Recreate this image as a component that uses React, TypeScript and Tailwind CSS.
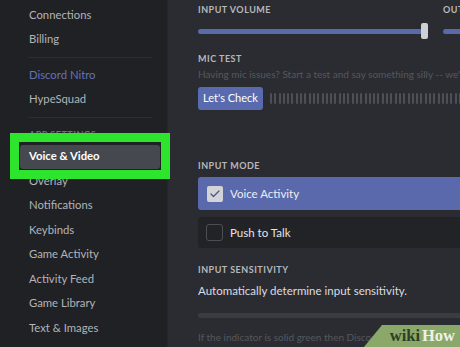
import { Check } from "lucide-react";

const font = "font-['Lato','Liberation_Sans',sans-serif]";

function NavItem({ label, active, nitro }: { label: string; active?: boolean; nitro?: boolean }) {
  return (
    <div
      className={`ml-[20px] w-[140px] h-[24.5px] pl-[9px] flex items-center text-[11.3px] rounded-[3px] ${
        active ? "bg-[#45484f] text-white font-bold" : nitro ? "text-[#6573b3]" : "text-[#b2b4b9]"
      }`}
    >
      {label}
    </div>
  );
}

function Divider() {
  return (
    <div className="h-[11px] flex items-center">
      <div className="ml-[28px] w-[124px] h-px bg-[#2c2e33]" />
    </div>
  );
}

function Heading({ children }: { children: string }) {
  return (
    <div className="text-[9px] leading-[11px] font-bold tracking-[0.5px] text-[#b6b8bc] uppercase">
      {children}
    </div>
  );
}

function Slider({ value }: { value: number }) {
  return (
    <div className="relative h-[16px] flex items-center">
      <div className="w-full h-[5px] rounded-full bg-[#5a69aa]" />
      <div
        className="absolute top-0 w-[7px] h-[16px] rounded-[2px] bg-[#cfd0d4]"
        style={{ left: `calc(${value}% - 7px)` }}
      />
    </div>
  );
}

export default function App() {
  const ticks = Array.from({ length: 46 });
  return (
    <div className={`relative w-[460px] h-[347px] overflow-hidden flex bg-[#2b2c31] ${font}`}>
      {/* sidebar */}
      <div className="w-[168px] shrink-0 h-full bg-[#202125] pt-[3px] border-r border-[#26272b]">
        <NavItem label="Connections" />
        <NavItem label="Billing" />
        <Divider />
        <NavItem label="Discord Nitro" nitro />
        <NavItem label="HypeSquad" />
        <Divider />
        <div className="h-[21.5px] pl-[29px] pt-[5px] text-[9px] font-bold tracking-[0.5px] text-[#6d7076]">
          APP SETTINGS
        </div>
        <NavItem label="Voice & Video" active />
        <NavItem label="Overlay" />
        <NavItem label="Notifications" />
        <NavItem label="Keybinds" />
        <NavItem label="Game Activity" />
        <NavItem label="Activity Feed" />
        <NavItem label="Game Library" />
        <NavItem label="Text & Images" />
      </div>

      {/* main */}
      <div className="flex-1 min-w-0 overflow-hidden pl-[30px] pt-[4px]">
        <div className="w-[520px]">
          <div className="flex gap-[15px]">
            <div className="w-[230px]">
              <Heading>Input Volume</Heading>
              <div className="mt-[8px]">
                <Slider value={100} />
              </div>
            </div>
            <div className="w-[230px]">
              <Heading>Output Volume</Heading>
              <div className="mt-[8px]">
                <Slider value={60} />
              </div>
            </div>
          </div>

          <div className="mt-[14px]">
            <Heading>Mic Test</Heading>
          </div>
          <div className="mt-[4px] text-[10px] leading-[13px] text-[#55585e] whitespace-nowrap">
            Having mic issues? Start a test and say something silly -- we'll play your voice back to you.
          </div>
          <div className="mt-[6px] flex items-center gap-[7px]">
            <button className="w-[65px] h-[23px] rounded-[3px] bg-[#5a6aae] text-white text-[11px]">
              Let's Check
            </button>
            <div className="flex gap-[2.3px] items-center">
              {ticks.map((_, i) => (
                <div key={i} className="w-[2px] h-[11px] rounded-[1px] bg-[#4c4f55]" />
              ))}
            </div>
          </div>

          <div className="mt-[50px]">
            <Heading>Input Mode</Heading>
          </div>
          <div className="mt-[6px] h-[33px] rounded-l-[3px] bg-[#5a69ab] flex items-center pl-[9px] gap-[7px]">
            <div className="w-[16px] h-[16px] rounded-[2px] bg-[#d3d4d8] flex items-center justify-center">
              <Check size={12} strokeWidth={2.5} className="text-[#4a5690]" />
            </div>
            <span className="text-[11.5px] text-[#eceef4]">Voice Activity</span>
          </div>
          <div className="mt-[7px] h-[31px] rounded-l-[3px] bg-[#222327] flex items-center pl-[8px] gap-[7px]">
            <div className="w-[17px] h-[17px] rounded-[3px] border border-[#4b4e54]" />
            <span className="text-[11.5px] text-[#e4e5e8]">Push to Talk</span>
          </div>

          <div className="mt-[16px]">
            <Heading>Input Sensitivity</Heading>
          </div>
          <div className="mt-[8px] text-[11.5px] leading-[16px] text-[#dcdde0]">
            Automatically determine input sensitivity.
          </div>
          <div className="mt-[14px] h-[5px] rounded-full bg-[#3a3c42]" />
          <div className="mt-[13px] text-[10px] leading-[13px] text-[#55585e] whitespace-nowrap">
            If the indicator is solid green then Discord is transmitting your beautiful voice.
          </div>
        </div>
      </div>

      {/* highlight annotation */}
      <div className="absolute left-[10px] top-[133px] w-[160px] h-[46px] border-[9px] border-[#2ee52e]" />

      {/* watermark */}
      <div className="absolute right-0 bottom-0 w-[96px] h-[22px] bg-[#8aa86a] [clip-path:polygon(18px_0,100%_0,100%_100%,0_100%)] flex items-end justify-end pr-[5px] pb-[1px]">
        <span className="font-['Liberation_Serif',serif] font-bold text-[16.5px] leading-[20px] text-[#2f3d26]">
          wiki
        </span>
        <span className="font-['Liberation_Serif',serif] font-bold text-[16.5px] leading-[20px] text-[#eef2e6] ml-[2px]">
          How
        </span>
      </div>
    </div>
  );
}
